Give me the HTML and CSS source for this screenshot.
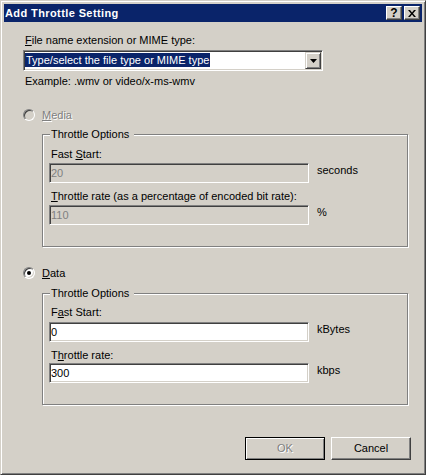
FILE: index.html
```html
<!DOCTYPE html>
<html lang="en">
<head>
  <meta charset="UTF-8" />
  <title>Add Throttle Setting</title>
  <link rel="stylesheet" href="styles.css">
</head>
<body>
  <div class="window">
    <div class="titlebar">
      <span class="title">Add Throttle Setting</span>
      <span class="cap-btn help">?</span>
      <span class="cap-btn close">
        <svg width="8" height="7" viewBox="0 0 8 7"><path d="M0 0h2l2 2.4L6 0h2L5 3.5 8 7H6L4 4.6 2 7H0l3-3.5z" /></svg>
      </span>
    </div>

    <div class="client">
      <div class="label"><u>F</u>ile name extension or MIME type:</div>
      <div class="combo">
        <span class="combo-text"><span class="selected">Type/select the file type or MIME type</span></span>
        <span class="drop-btn">
          <svg width="7" height="4" viewBox="0 0 7 4"><path d="M0 0h7L3.5 4z" /></svg>
        </span>
      </div>
      <div class="hint">Example: .wmv or video/x-ms-wmv</div>

      <!-- Media throttling -->
      <div class="radio-row disabled">
        <span class="radio"></span>
        <span class="radio-label"><u>M</u>edia</span>
      </div>
      <div class="group group-media">
        <div class="legend">Throttle Options</div>
        <div class="field-label first">Fast <u>S</u>tart:</div>
        <div class="field-row">
          <div class="edit disabled">20</div>
          <span class="unit">seconds</span>
        </div>
        <div class="field-label">
          <u>T</u>hrottle rate (as a percentage of encoded bit rate):
        </div>
        <div class="field-row">
          <div class="edit disabled">110</div>
          <span class="unit">%</span>
        </div>
      </div>

      <!-- Data throttling -->
      <div class="radio-row data-row">
        <span class="radio checked"></span>
        <span class="radio-label"><u>D</u>ata</span>
      </div>
      <div class="group group-data">
        <div class="legend">Throttle Options</div>
        <div class="field-label first">F<u>a</u>st Start:</div>
        <div class="field-row">
          <div class="edit">0</div>
          <span class="unit">kBytes</span>
        </div>
        <div class="field-label">T<u>h</u>rottle rate:</div>
        <div class="field-row tight">
          <div class="edit">300</div>
          <span class="unit">kbps</span>
        </div>
      </div>

      <div class="actions">
        <button class="btn default" disabled>OK</button>
        <button class="btn">Cancel</button>
      </div>
    </div>
  </div>
</body>
</html>
```

FILE: styles.css
```css
body {
  margin: 0;
  font-family: "Liberation Sans", Arial, sans-serif;
  font-size: 11px;
  color: #000;
  background: #d4d0c8;
}

.window {
  width: 426px;
  height: 475px;
  box-sizing: border-box;
  border: 1px solid;
  border-color: #d4d0c8 #404040 #404040 #d4d0c8;
  box-shadow: inset 1px 1px #fff, inset -1px -1px #808080;
  padding: 3px;
  background: #d4d0c8;
  display: flex;
  flex-direction: column;
}

/* caption */
.titlebar {
  height: 18px;
  flex-shrink: 0;
  display: flex;
  align-items: center;
  background: #0a246a;
  padding: 0 2px 0 1px;
}

.title {
  flex: 1;
  color: #fff;
  font-weight: bold;
  letter-spacing: 0.4px;
  line-height: 13px;
}

.cap-btn {
  width: 16px;
  height: 14px;
  box-sizing: border-box;
  border: 1px solid;
  border-color: #fff #404040 #404040 #fff;
  box-shadow: inset -1px -1px #808080;
  background: #d4d0c8;
  display: flex;
  align-items: center;
  justify-content: center;
  font-weight: bold;
  font-size: 12px;
  line-height: 12px;
}

.close {
  margin-left: 2px;
}

.close svg {
  fill: #000;
}

/* dialog body */
.client {
  flex: 1;
  display: flex;
  flex-direction: column;
  padding: 12px 0 0 19px;
  line-height: 13px;
}

.label,
.hint {
  margin-left: 2px;
}

.hint {
  margin-top: 4px;
}

.combo {
  margin-top: 3px;
  width: 300px;
  height: 21px;
  box-sizing: border-box;
  border: 1px solid;
  border-color: #808080 #fff #fff #808080;
  box-shadow: inset 1px 1px #404040, inset -1px -1px #d4d0c8;
  padding: 1px;
  background: #fff;
  display: flex;
}

.combo-text {
  flex: 1;
  padding-top: 1px;
}

.selected {
  display: inline-block;
  background: #0a246a;
  color: #fff;
  line-height: 14px;
  padding: 0 1px;
}

.drop-btn {
  width: 16px;
  height: 17px;
  box-sizing: border-box;
  border: 1px solid;
  border-color: #d4d0c8 #404040 #404040 #d4d0c8;
  box-shadow: inset 1px 1px #fff, inset -1px -1px #808080;
  background: #d4d0c8;
  display: flex;
  align-items: center;
  justify-content: center;
}

.drop-btn svg {
  fill: #000;
}

/* radio buttons */
.radio-row {
  display: flex;
  align-items: flex-start;
  margin-top: 21px;
}

.data-row {
  margin-top: 20px;
}

.radio {
  position: relative;
  width: 12px;
  height: 12px;
  box-sizing: border-box;
  border-radius: 50%;
  border: 1px solid;
  border-color: #808080 #fff #fff #808080;
  box-shadow: inset 1px 1px #404040, inset -1px -1px #d4d0c8;
  background: #fff;
  margin-right: 7px;
}

.radio.checked::after {
  content: "";
  position: absolute;
  left: 3px;
  top: 3px;
  width: 4px;
  height: 4px;
  border-radius: 50%;
  background: #000;
}

.disabled .radio {
  background: #d4d0c8;
}

.disabled .radio-label {
  color: #808080;
  text-shadow: 1px 1px #fff;
}

/* group boxes */
.group {
  width: 366px;
  box-sizing: border-box;
  margin: 12px 0 0 19px;
  border: 1px solid #808080;
  box-shadow: 1px 1px #fff, inset 1px 1px #fff;
  padding: 0 0 21px 6px;
  display: flex;
  flex-direction: column;
}

.group-data {
  margin-top: 13px;
}

.legend {
  align-self: flex-start;
  margin: -7px 0 0 1px;
  padding: 0 5px 0 1px;
  background: #d4d0c8;
}

.field-label {
  margin: 7px 0 0 2px;
}

.group-data .field-label.first {
  margin-top: 6px;
}

.field-row {
  display: flex;
  align-items: flex-start;
  margin-top: 2px;
}

.group-data .field-row {
  margin-top: 3px;
}

.group-data .field-row.tight {
  margin-top: 1px;
}

.edit {
  width: 260px;
  height: 20px;
  box-sizing: border-box;
  border: 1px solid;
  border-color: #808080 #fff #fff #808080;
  box-shadow: inset 1px 1px #404040, inset -1px -1px #d4d0c8;
  padding: 1px;
  line-height: 16px;
  background: #fff;
}

.edit.disabled {
  background: #d4d0c8;
  color: #808080;
}

.unit {
  margin: 1px 0 0 8px;
}

/* buttons */
.actions {
  display: flex;
  justify-content: flex-end;
  gap: 6px;
  margin-top: 32px;
  padding-right: 11px;
}

.btn {
  width: 80px;
  height: 23px;
  box-sizing: border-box;
  margin: 0;
  padding: 0;
  font: inherit;
  color: #000;
  background: #d4d0c8;
  border: 1px solid;
  border-color: #fff #404040 #404040 #fff;
  box-shadow: inset -1px -1px #808080;
  border-radius: 0;
}

.btn.default {
  border-color: #000;
  box-shadow: inset 1px 1px #fff, inset -1px -1px #808080;
}

.btn:disabled {
  color: #808080;
  text-shadow: 1px 1px #fff;
}
```
